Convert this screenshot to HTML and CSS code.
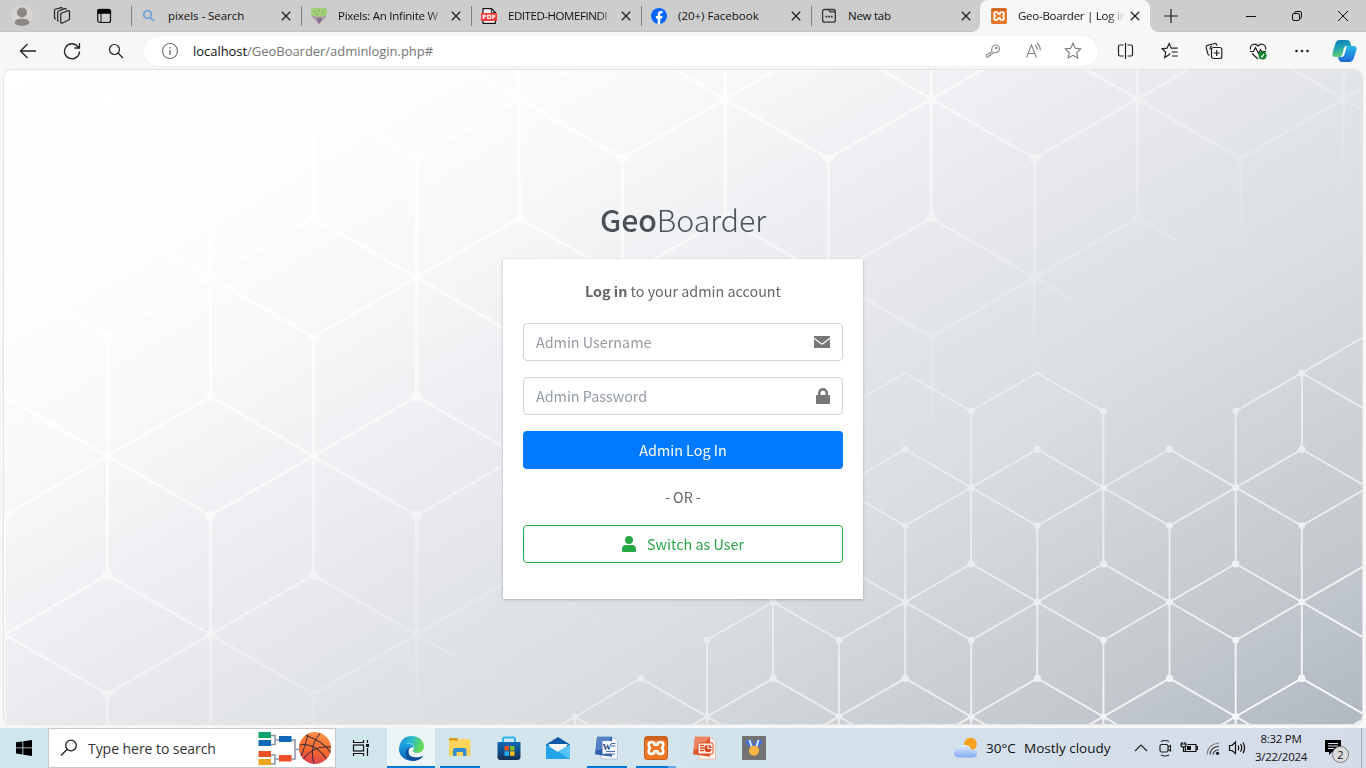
FILE: index.html
```html
<!DOCTYPE html>
<html lang="en">
<head>
<meta charset="utf-8">
<title>Geo-Boarder | Log in</title>
<link rel="stylesheet" href="styles.css">
</head>
<body>
<svg class="defs" width="0" height="0" aria-hidden="true">
  <symbol id="x" viewBox="0 0 10 10"><path d="M.8.8l8.4 8.4M9.2.8L.8 9.2" fill="none" stroke="#222" stroke-width="1.3"/></symbol>
  <symbol id="xampp" viewBox="0 0 24 24">
    <rect x=".5" y=".5" width="23" height="23" rx="2.5" fill="#ef7622" stroke="#c2601f"/>
    <path d="M1 3q0-2 2-2h18q2 0 2 2v1H1z" fill="#b9541d" opacity=".6"/>
    <path d="M7.500 6C5.600 6 4.700 7 4.700 8.800c0 1.600.5 2.500 1.500 3.200-1 .7-1.500 1.600-1.500 3.200C4.700 17 5.600 18 7.500 18s3-1 3-2.700h3c0 1.700 1.100 2.700 3 2.700s2.800-1 2.800-2.800c0-1.600-.5-2.500-1.500-3.200 1-.7 1.500-1.600 1.500-3.200C19.300 7 18.400 6 16.500 6s-3 1-3 2.700h-3C10.500 7 9.400 6 7.500 6z" fill="none" stroke="#fff" stroke-width="2.600" stroke-linejoin="round"/>
  </symbol>
</svg>

<header class="tabs">
  <div class="tab-tools">
    <svg class="avatar" width="22" height="22" viewBox="0 0 22 22"><circle cx="11" cy="11" r="10.500" fill="#d8d5d1"/><circle cx="11" cy="7.500" r="5" fill="#8b8783"/><path d="M3.500 18.300c0-3.300 2.500-4.600 7.500-4.600s7.500 1.300 7.500 4.600c-4 3.600-11 3.600-15 0z" fill="#8b8783"/></svg>
    <svg class="spaces" width="18" height="18" viewBox="0 0 18 18" fill="none" stroke="#222" stroke-width="1.200"><path d="M8 6.300l7-2.500q1.500-.4 1.500 1v7.700l-7 3.500q-1.800.6-1.800-1V7.500z"/><path d="M5.500 14.500l-.8-.6V5.300q0-1 1-1.300l6-2.300q1.500-.3 1.500 1"/><path d="M2.700 12.300l-1.200-1V3.500q0-1 1-1.300L8 .6q1-.2 1.500.8"/></svg>
    <svg class="panes" width="16" height="16" viewBox="0 0 16 16"><rect x="1.700" y="2" width="12.800" height="12.500" rx="2" fill="none" stroke="#111" stroke-width="1.200"/><path d="M1.500 2.500Q1.500 1.300 3 1.300h10q1.700 0 1.700 1.500v2.500H1.500zM5 5v9" fill="#000" stroke="#111"/></svg>
  </div>
  <div class="tab">
    <svg class="fav" viewBox="0 0 16 16" fill="none" stroke="#6ea5d8" stroke-width="1.800"><circle cx="6.500" cy="6.500" r="3.800"/><path d="M9.300 9.300l4 4"/></svg>
    <span class="tab-name wide">pixels - Search</span><svg class="close"><use href="#x"/></svg>
  </div>
  <div class="tab">
    <svg class="fav" viewBox="0 0 16 16"><path d="M1 7h14v2h-1v2h-2v2h-2v2H9v1H7v-1H6v-2H4v-2H2V9H1z" fill="#ad9aaa"/><path d="M6 10h5v2h-1v2H9v1H7v-2H6z" fill="#85718d"/><path d="M1 0h14l1 1v6h-2v1h-2v1h-2V8H8v1H5V8H2V7H0V1z" fill="#a5ce79"/><path d="M3 3h2v1H3zM7 2h2v1H7zM11 4h2v1h-2zM5 6h2v1H5zM13 1h1v1h-1zM10 6h1v1h-1z" fill="#6fa850"/></svg>
    <span class="tab-name fade">Pixels: An Infinite W</span><svg class="close"><use href="#x"/></svg>
  </div>
  <div class="tab">
    <svg class="fav" viewBox="0 0 16 16"><path d="M2 .7h8.500l3.800 3.800v10.800H2z" fill="#fff" stroke="#111" stroke-width="1.200"/><path d="M10.300.8v4h4" fill="none" stroke="#111"/><rect x="0" y="5" width="16" height="8" fill="#f23b3b"/><text x="8" y="11.300" class="pdf">PDF</text></svg>
    <span class="tab-name fade tight">EDITED-HOMEFINDI</span><svg class="close"><use href="#x"/></svg>
  </div>
  <div class="tab">
    <svg class="fav" viewBox="0 0 16 16"><circle cx="8" cy="8" r="8" fill="#0866ff"/><path d="M6.700 16v-5.500H4.900V8h1.800V6.700c0-2.600 1.200-3.700 3.700-3.700l1.100.1v2.200h-.8c-1.200 0-1.500.5-1.500 1.500V8h2.200l-.4 2.500H9.200V16z" fill="#fff"/></svg>
    <span class="tab-name facebook">(20+) Facebook</span><svg class="close"><use href="#x"/></svg>
  </div>
  <div class="tab">
    <svg class="fav" viewBox="0 0 16 16" fill="none" stroke="#333" stroke-width="1.300"><path d="M3.500 1.500h4l1.500 2.300h5.300v8.400q0 2-2 2H3.600q-2 0-2-2V3.500q0-2 2-2zM8 1.500h4.300q2 0 2 2v1"/><path d="M4.500 8.600h1.800M7.200 8.600H9M9.900 8.600h1.800" stroke-width="1.800"/></svg>
    <span class="tab-name">New tab</span><svg class="close"><use href="#x"/></svg>
  </div>
  <div class="tab active">
    <svg class="fav"><use href="#xampp"/></svg>
    <span class="tab-name fade">Geo-Boarder | Log in</span><svg class="close"><use href="#x"/></svg>
  </div>
  <svg class="plus" width="14" height="14" viewBox="0 0 14 14"><path d="M7 0v14M0 7h14" stroke="#222" stroke-width="1.200"/></svg>
  <div class="window-buttons">
    <svg width="12" height="12" viewBox="0 0 12 12"><path d="M1 6.500h10" stroke="#111"/></svg>
    <svg width="12" height="12" viewBox="0 0 12 12" fill="none" stroke="#111"><rect x="1.500" y="3.500" width="7" height="7" rx="1.500"/><path d="M3.500 3.300V3q0-1.500 1.500-1.500h4q1.500 0 1.500 1.500v4q0 1.500-1.500 1.500h-.4"/></svg>
    <svg width="12" height="12" viewBox="0 0 12 12"><path d="M1 1l10 10M11 1L1 11" stroke="#111"/></svg>
  </div>
</header>

<nav class="toolbar">
  <span class="tool"><svg width="18" height="16" viewBox="0 0 18 16"><path d="M8.500 1L1.500 8l7 7M1.500 8H17" fill="none" stroke="#222" stroke-width="1.300"/></svg></span>
  <span class="tool"><svg width="18" height="18" viewBox="0 0 18 18" fill="none" stroke="#222" stroke-width="1.300"><path d="M16.500 9.500A7.500 7.500 0 1 1 14.800 4.500L16.300 6M16.500 1v5h-5"/></svg></span>
  <span class="tool"><svg width="16" height="16" viewBox="0 0 16 16" fill="none" stroke="#222" stroke-width="1.200"><circle cx="6.500" cy="6.500" r="5"/><path d="M10 10l5 5"/></svg></span>
  <div class="address">
    <svg class="info" width="18" height="18" viewBox="0 0 18 18"><circle cx="9" cy="9" r="7.500" fill="none" stroke="#777" stroke-width="1.200"/><path d="M9 8v5M9 5v1.600" stroke="#777" stroke-width="1.500"/></svg>
    <span class="url"><b>localhost</b>/GeoBoarder/adminlogin.php#</span>
    <span class="pill-tool"><svg width="16" height="16" viewBox="0 0 16 16" fill="none" stroke="#8a8a8a" stroke-width="1.100"><path d="M7 8.500C6 4.500 8 2 10.500 2S14.500 4 14.500 5.900 12.500 10.500 8.500 9.500L7 11H5.500v1.500H4V14H1.500v-2.300z"/><circle cx="11.200" cy="5" r=".8"/></svg></span>
    <span class="pill-tool"><svg width="18" height="18" viewBox="0 0 18 18" fill="none" stroke="#808080" stroke-width="1.100"><path d="M2.500 15.500L7.500 3l5 12.500M4.200 11.500h6.600M11 3q2.200 1.500 2.200 4.500M13 1.200q3.500 2.800 3.200 7.100"/></svg></span>
    <span class="pill-tool"><svg width="18" height="18" viewBox="0 0 18 18"><path d="M9 1.300l2.300 5 5.400.6-4 3.700 1.100 5.400L9 13.300 4.200 16l1.100-5.400-4-3.700 5.400-.6z" fill="none" stroke="#777" stroke-width="1.100"/></svg></span>
  </div>
  <span class="tool"><svg width="18" height="18" viewBox="0 0 18 18" fill="none" stroke="#222" stroke-width="1.200"><path d="M6.500 3H3q-1.500 0-1.500 1.500v8Q1.500 14 3 14h3.500M10.500 3H14q1.500 0 1.500 1.500v8q0 1.500-1.500 1.500h-3.500M8.500 1v16"/></svg></span>
  <span class="tool"><svg width="18" height="18" viewBox="0 0 18 18" fill="none" stroke="#222" stroke-width="1.200"><path d="M9 11.500L8 12.700 3.700 15.500l1-5.200-3.500-3.500 4.800-.6L8.200 1.500l2 4.700h6.500M10.500 10h6.300M11 14h5.800"/></svg></span>
  <span class="tool"><svg width="18" height="18" viewBox="0 0 18 18" fill="none" stroke="#222" stroke-width="1.200"><rect x="6.500" y="5.500" width="10.300" height="11" rx="2"/><path d="M11.700 8v6M8.700 11h6M4.500 13.500q-1.500-.5-1.800-2L1.200 5.500Q1 3.800 2.500 3.300l7-1.800q1.700-.3 2.300 1.300l.3.900M5 7.500q0-3 2-3.500"/></svg></span>
  <span class="tool"><svg width="18" height="18" viewBox="0 0 18 18" fill="none" stroke="#222" stroke-width="1.200"><path d="M1.500 7.500C.5 2.500 6 .5 9 4c3-3.500 8.500-1.500 7.500 3.500M1 9.500h3.500l2-4 3 6 2-4 1 2H17M3 11.500L9 17"/><circle cx="13.500" cy="13.500" r="4" fill="#12852b" stroke="none"/><path d="M12 14l1 1 2-3" stroke="#fff"/></svg></span>
  <span class="tool"><svg width="16" height="4" viewBox="0 0 16 4" fill="#222"><circle cx="2.500" cy="2" r="1.300"/><circle cx="8" cy="2" r="1.300"/><circle cx="13.500" cy="2" r="1.300"/></svg></span>
  <span class="copilot"><svg width="25" height="24" viewBox="0 0 25 24">
    <defs><linearGradient id="cp1" x2=".3" y2="1"><stop stop-color="#0a70b8"/><stop offset=".5" stop-color="#20a4b4"/><stop offset="1" stop-color="#65d26c"/></linearGradient><linearGradient id="cp2" x2="0" y2="1"><stop stop-color="#29b6e8"/><stop offset="1" stop-color="#1c68d4"/></linearGradient></defs>
    <path d="M7 1h8q2.500 0 3.500 3l.8 3H15q-2.500 0-3.300 3l-1.200 5q-1 3-3.500 3H3q-3 0-2.500-3.500Q2 8 3.600 4 4.700 1 7 1z" fill="url(#cp1)"/>
    <path d="M18 23h-8q-2.500 0-3.500-3l-.5-2q3.500 0 4.500-3l1.500-5q.8-3 3.500-3H22q3 0 2.500 3.500Q23 16 21.400 20q-1 3-3.400 3z" fill="url(#cp2)"/><path d="M12 9q.8-2 3-2l-2.200 7.500Q12 18 9.500 18H7q2.500 0 3.500-3z" fill="#eefafa"/></svg></span>
</nav>

<main class="stage">
  <svg class="lattice" width="1358" height="654" viewBox="4 70 1358 654" aria-hidden="true">
    <defs>
      <linearGradient id="fadeBig" gradientUnits="userSpaceOnUse" x1="4" y1="70" x2="629" y2="1149"><stop stop-color="#fff" stop-opacity=".9"/><stop offset=".3" stop-color="#fff" stop-opacity=".75"/><stop offset=".43" stop-color="#fff" stop-opacity=".52"/><stop offset=".55" stop-color="#fff" stop-opacity=".2"/><stop offset=".65" stop-color="#fff" stop-opacity="0"/></linearGradient>
      <linearGradient id="fadeSmall" gradientUnits="userSpaceOnUse" x1="4" y1="70" x2="629" y2="1149"><stop offset=".55" stop-color="#fff" stop-opacity=".3"/><stop offset=".7" stop-color="#fff" stop-opacity=".5"/><stop offset=".85" stop-color="#fff" stop-opacity=".72"/><stop offset="1" stop-color="#fff" stop-opacity=".98"/></linearGradient>
      <mask id="maskBig" maskUnits="userSpaceOnUse" x="4" y="70" width="1358" height="654"><rect x="4" y="70" width="1358" height="654" fill="url(#fadeBig)"/></mask>
      <mask id="maskSmall" maskUnits="userSpaceOnUse" x="4" y="70" width="1358" height="654"><rect x="4" y="70" width="1358" height="654" fill="url(#fadeSmall)"/></mask>
      <g id="big"><path d="M0-119V119M-103-59.500L103 59.500M-103 59.500L103-59.500" stroke="#fff" stroke-width="3"/><g fill="#fff"><circle r="5"/><circle cy="-119" r="5"/><circle cy="119" r="5"/></g></g>
      <g id="bigRow"><use href="#big" x="-206"/><use href="#big"/><use href="#big" x="206"/><use href="#big" x="412"/><use href="#big" x="618"/><use href="#big" x="824"/><use href="#big" x="1030"/><use href="#big" x="1236"/></g>
      <g id="small"><path d="M0-76.400V76.400M-66.100-38.200L66.100 38.200M-66.100 38.200L66.100-38.200" stroke="#fff" stroke-width="1.900"/><g fill="#fff"><circle r="3.400"/><circle cy="-76.400" r="3.400"/><circle cy="76.400" r="3.400"/><circle cx="-66.100" cy="-38.200" r="3.400"/><circle cx="66.100" cy="-38.200" r="3.400"/></g></g>
    </defs>
    <g mask="url(#maskBig)"><use href="#bigRow" x="107.400" y="99"/><use href="#bigRow" x="210.400" y="277.500"/><use href="#bigRow" x="107.400" y="456"/><use href="#bigRow" x="210.400" y="634.500"/><use href="#bigRow" x="107.400" y="813"/></g>
    <g mask="url(#maskSmall)">
      <use href="#small" x="839" y="487.500"/><use href="#small" x="971.200" y="487.500"/><use href="#small" x="1103.400" y="487.500"/><use href="#small" x="1235.700" y="487.500"/><use href="#small" x="1367.900" y="487.500"/>
      <use href="#small" x="905.200" y="602"/><use href="#small" x="1037.300" y="602"/><use href="#small" x="1169.500" y="602"/><use href="#small" x="1301.800" y="602"/>
      <use href="#small" x="839" y="716.600"/><use href="#small" x="971.200" y="716.600"/><use href="#small" x="1103.400" y="716.600"/><use href="#small" x="1235.700" y="716.600"/><use href="#small" x="1367.900" y="716.600"/><use href="#small" x="707" y="716.600"/>
      <path d="M839 411l66-38 66 38 66-38 66 38M1236 411l132-76.500M1302 373l66 38M1302 373v77M707 640l66-38 66 38M773 602v76M641 678l-82 48M575 717v8M575 717l16 9" fill="none" stroke="#fff" stroke-width="1.900"/>
      <g fill="#fff"><circle cx="1301.800" cy="373" r="3.400"/><circle cx="773" cy="602" r="3.400"/><circle cx="575" cy="716.600" r="3.400"/></g>
    </g>
  </svg>
  <div class="login">
    <h1 class="logo"><b>Geo</b>Boarder</h1>
    <section class="card">
      <p class="message"><b>Log in</b> to your admin account</p>
      <div class="field"><span>Admin Username</span><svg width="16" height="16" viewBox="0 0 16 16"><path d="M0 2h16v1.500L8.800 9q-.8.600-1.600 0L0 3.500zM0 5l6.500 4.900q1.500 1 3 0L16 5v9H0z" fill="#777"/></svg></div>
      <div class="field"><span>Admin Password</span><svg width="14" height="16" viewBox="0 0 14 16"><path d="M2 7V5a5 5 0 0 1 10 0v2h1q1 0 1 1v7q0 1-1 1H1q-1 0-1-1V8q0-1 1-1zm2.500 0h5V5a2.500 2.500 0 0 0-5 0z" fill="#777" fill-rule="evenodd"/></svg></div>
      <div class="button primary"><span>Admin Log In</span></div>
      <p class="or">- OR -</p>
      <div class="button outline"><svg width="14" height="16" viewBox="0 0 14 16" fill="#28a745"><circle cx="7" cy="4" r="4"/><path d="M4 9h6q4 0 4 4v1.500q0 1.500-1.500 1.500h-11Q0 16 0 14.500V13q0-4 4-4z"/></svg><span>Switch as User</span></div>
    </section>
  </div>
</main>

<footer class="taskbar">
  <div class="start"><svg width="16" height="16" viewBox="0 0 16 16"><path d="M0 2.300l6.500-.9v6.100H0zM7.300 1.300L16 0v7.500H7.300zM0 8.300h6.500v6.200L0 13.600zM7.300 8.300H16V16l-8.700-1.300z"/></svg></div>
  <div class="search">
    <svg width="18" height="18" viewBox="0 0 18 18" fill="none" stroke="#222" stroke-width="1.300"><circle cx="11" cy="6.500" r="5.300"/><path d="M7.200 10.300L1 16.500"/></svg>
    <span>Type here to search</span>
    <svg class="doodle" width="75" height="38" viewBox="0 0 75 38"><g fill="none" stroke="#8d93a3" stroke-width="1.500"><path d="M13 6.500h4v9h-4M17 11h5M13 26h4v9h-4M17 30h5M33 11h4v19h-4M37 20.500h5"/></g><path d="M.5 3H13v6H.5z" fill="#10a56c"/><path d="M.5 11H13v6H.5zM21 7h12.500v6H21z" fill="#1068b8"/><path d="M.5 22H13v6H.5zM21 26h12.500v6.500H21z" fill="#ef4e26"/><path d="M.5 30H13v6H.5z" fill="#eda61c"/>
      <defs><linearGradient id="ball" x1=".6" y1="0" x2=".4" y2="1"><stop stop-color="#ff9147"/><stop offset=".6" stop-color="#f4662f"/><stop offset="1" stop-color="#dc3f56"/></linearGradient></defs><circle cx="57" cy="19" r="16" fill="url(#ball)"/><path d="M41.500 16q15-3 27 14M48 6.500q18 6 24.500 17M62 4.500q-11 12-6 30M73 18q-17-2-28 12M50 5q-3 13-7 22" fill="none" stroke="#463036" stroke-width="1.100"/></svg>
  </div>
  <div class="taskview"><svg width="18" height="18" viewBox="0 0 18 18" fill="none" stroke="#111" stroke-width="1.200"><path d="M1.500 1v2.500h10V1M1.500 17v-2.500h10V17M15.500 1v3M15.500 9v8"/><rect x="1.500" y="6" width="10" height="6"/><path d="M14 5h3v3h-3z" fill="#111" stroke="none"/></svg></div>
  <div class="apps">
    <div class="app current"><svg width="25" height="25" viewBox="0 0 24 24"><defs><linearGradient id="e1" x2="1" y2=".3"><stop stop-color="#1684d3"/><stop offset=".5" stop-color="#2cbbd0"/><stop offset="1" stop-color="#66db55"/></linearGradient><linearGradient id="e2" x2="0" y2="1"><stop stop-color="#1ba5e4"/><stop offset="1" stop-color="#0961ae"/></linearGradient></defs><path d="M0 12C1 3.500 6 0 12 0c7.500 0 12 5 12 9.800 0 4-2.800 6.400-6.500 6.400-2.900 0-4.600-1.200-4.400-2 .2-.7 1.200-1.200 1.200-3C14.300 8.500 11.500 7 8.500 7 4 7 1 9.500 0 12z" fill="url(#e1)"/><path d="M0 13C0 8.500 4.500 6.500 8.500 7c3 .3 5.500 2 5.800 4-3-1.500-5.300.7-5.300 4 0 4.500 3.500 8 7.500 8C8 26 0 20 0 13z" fill="url(#e2)"/><path d="M9 15c0 3.500 3.500 5.500 7.500 5.500 2.500 0 4.500-.8 5.700-1.400.6-.2.800.2.500.7C20.500 22.700 16.500 24 13.500 24 8 23 5 18 7 14c1.500-3 4.500-4.300 6.500-3.500C10.500 10.500 9 12.500 9 15z" fill="#0f4e9c"/></svg></div>
    <div class="app open"><svg width="22" height="20" viewBox="0 0 22 20"><path d="M0 1q0-1 1-1h7l2 3H0z" fill="#d99b13"/><path d="M0 2.500h9l1.500-1.500H20q1.500 0 1.500 1.500V18H0z" fill="#ffd35e"/><path d="M4 18v-6q0-2 2-2h9.500q2 0 2 2v6h-3.500v-4h-6.500v4z" fill="#348fcf"/></svg></div>
    <div class="app"><svg width="24" height="24" viewBox="0 0 24 24"><defs><linearGradient id="st" x2="0" y2="1"><stop stop-color="#0f69bb"/><stop offset="1" stop-color="#173052"/></linearGradient></defs><path d="M6 8V3q0-1.500 1.500-1.500h9Q18 1.500 18 3v5" fill="none" stroke="#2eb4ed" stroke-width="2"/><path d="M.5 6h23v15q0 3-3 3h-17q-3 0-3-3z" fill="url(#st)"/><path d="M7.500 10H12v4.500H7.500z" fill="#ef5425"/><path d="M13 10h4.500v4.500H13z" fill="#7fba2c"/><path d="M7.500 15.300H12v4.500H7.500z" fill="#1fb0ef"/><path d="M13 15.300h4.500v4.500H13z" fill="#fdba12"/></svg></div>
    <div class="app"><svg width="24" height="24" viewBox="0 0 24 24"><path d="M0 8.500L12 1l12 7.500V10H0z" fill="#0f5ba7"/><path d="M2 8h20l-8 9h-4z" fill="#f4f7fa"/><path d="M0 8.500L12 16 24 8.500V23H0z" fill="#25a3ea"/><path d="M24 8.500V23L12 15.500z" fill="#54c3f5"/></svg></div>
    <div class="app open"><svg width="23" height="24" viewBox="0 0 23 24"><path d="M6 2h13l3.500 3v18H6z" fill="#f6f8fd" stroke="#aab9d6" stroke-width=".8"/><path d="M2 .8h15v20L0 18.300z" fill="#315fae"/><path d="M2 .8h15L9 12 1 15z" fill="#7096d2" opacity=".6"/><rect x="7.500" y="5" width="12" height="13" fill="#f9fbff"/><path d="M16 7.500h4.500M16 10h4.500M11 15.500h9M10 18h10" stroke="#4a6fae"/><text x="7.500" y="13.500" class="wd">W</text></svg></div>
    <div class="app open more"><svg width="24" height="24"><use href="#xampp"/></svg></div>
    <div class="app"><svg width="23" height="24" viewBox="0 0 23 24"><path d="M6 2h13l3.500 3v18H6z" fill="#fff4ec" stroke="#e0b9a6" stroke-width=".8"/><path d="M2 .8h15v20L0 18.300z" fill="#e0562c"/><path d="M2 .8h15L9 10 1 14z" fill="#f2a27f" opacity=".65"/><rect x="5" y="7" width="15" height="11" rx="1" fill="#fff5ef" stroke="#d84c23"/><path d="M7 9.500h4M7 12h4M7 14.500h4" stroke="#d84c23" stroke-width="1.500"/><circle cx="15" cy="12.500" r="3.700" fill="#d84c23"/><path d="M15 12.500V9M15 12.500h4" stroke="#fff"/></svg></div>
    <div class="app"><svg width="24" height="24" viewBox="0 0 24 24"><rect width="24" height="24" fill="#737373"/><path d="M4 4h6l2 7h-2q-6-1-6-7zM14 4h6q0 6-6 7h-2z" fill="#3f70ea"/><path d="M7.500 4l2 6.500M16.500 4l-2 6.500" fill="none" stroke="#d6ebff" stroke-width="2"/><circle cx="12" cy="14.800" r="5" fill="#ffb545"/></svg></div>
  </div>
  <div class="tray">
    <svg class="weather" width="26" height="22" viewBox="0 0 26 22"><defs><linearGradient id="cl" x2="0" y2="1"><stop stop-color="#e6f0ff"/><stop offset="1" stop-color="#7fa9ee"/></linearGradient></defs><circle cx="17.500" cy="7" r="6.300" fill="#f9a01d"/><path d="M6 20.500Q1 20.500 1 16t5-4.500Q8 8 12 8q5 0 6.500 4.500 5.500-.5 5.500 4t-4.500 4z" fill="url(#cl)"/></svg>
    <span class="temp">30°C</span><span class="sky">Mostly cloudy</span>
    <svg class="ticon" viewBox="0 0 18 18" fill="none" stroke="#222" stroke-width="1.200"><path d="M3 12l6-6 6 6"/></svg>
    <svg class="ticon" viewBox="0 0 18 18" fill="none" stroke="#222" stroke-width="1.200"><rect x="4" y="5.500" width="8" height="7.500" rx="1.500"/><path d="M12 8l2.500-1.500v5.500L12 10.500M5 2.500q4-2 8 0M5 16q4 2 8 0"/></svg>
    <svg class="ticon" viewBox="0 0 18 18" fill="none" stroke="#111" stroke-width="1.200"><path d="M7.500 5.500H16v7H5.500v-4M16 7.500h1.500v3H16M2 3v2M5 3v2M1 5h5v1q0 2-2.500 2T1 6zM3.500 8v4.500h2"/><path d="M7 7h4v4H7z" fill="#111" stroke="none"/></svg>
    <svg class="ticon" viewBox="0 0 18 18" fill="none" stroke="#333" stroke-width="1.100"><path d="M3 15.500Q4 5 15 4" stroke="#777"/><path d="M6 15.500Q6.500 8 15 7.300M9 15.500q.5-4.500 6-4.800"/><circle cx="13.500" cy="14.300" r="1.600" fill="#111" stroke="none"/></svg>
    <svg class="ticon vol" viewBox="0 0 18 18" fill="none" stroke="#111" stroke-width="1.200"><path d="M1.500 6.500H4l3.500-3.500v11.500L4 11.500H1.500zM10 6.500q1.500 2.300 0 4.600M12.500 5q2.500 3.800 0 7.600M15 3.500q3.200 5.300 0 10.600"/></svg>
    <div class="clock"><span>8:32 PM</span><span>3/22/2024</span></div>
    <div class="notify"><svg width="16" height="16" viewBox="0 0 16 16"><path d="M0 0h16v12h-9l-3 3v-3H0z"/><path d="M3 3.500h10M3 6h10M3 8.500h6" stroke="#dce3ec" stroke-width="1.100"/></svg><span class="badge">2</span></div>
    <span class="edge"></span>
  </div>
</footer>
</body>
</html>
```
FILE: styles.css
```css
* { box-sizing: border-box; }
body {
  margin: 0;
  width: 1366px;
  height: 768px;
  overflow: hidden;
  display: flex;
  flex-direction: column;
  background: #f7f7f7;
  font-family: "Open Sans", "Noto Sans", sans-serif;
  color: #111;
}
svg { display: block; flex: none; }
.defs { position: absolute; }

/* tab strip */
.tabs { height: 32px; flex: none; display: flex; background: #cdcdcd; border-bottom: 1px solid #c5c5c5; }
.tab-tools { width: 131px; flex: none; display: flex; align-items: center; padding-left: 11px; }
.spaces { margin-left: 20px; }
.panes { margin-left: 25px; }
.tab { width: 170px; flex: none; display: flex; align-items: center; padding: 0 10px; position: relative; }
.tab::before { content: ""; position: absolute; left: 0; top: 6px; width: 1px; height: 20px; background: #808080; }
.fav { width: 16px; height: 16px; }
.tab-name { width: 108px; margin-left: 11px; flex: none; white-space: nowrap; font-size: 11.500px; letter-spacing: -.25px; line-height: 16px; }
.wide { letter-spacing: -.05px; }
.tight { letter-spacing: -.45px; }
.facebook { letter-spacing: 0; }
.fade { -webkit-mask-image: linear-gradient(90deg, #000 84%, transparent 99%); mask-image: linear-gradient(90deg, #000 84%, transparent 99%); }
.close { width: 10px; height: 10px; margin-left: 5px; }
.active { background: #f7f7f7; border-radius: 8px 8px 0 0; height: 32px; margin-left: -1px; padding-left: 11px; }
.active .close { margin-left: 4px; }
.active::before, .active::after { content: ""; position: absolute; top: auto; bottom: 0; width: 8px; height: 8px; }
.active::before { left: -8px; background: radial-gradient(circle at 0 0, transparent 7.500px, #f7f7f7 8px); }
.active::after { right: -8px; background: radial-gradient(circle at 100% 0, transparent 7.500px, #f7f7f7 8px); }
.pdf { font: bold 6px "DejaVu Sans", sans-serif; fill: #fff; text-anchor: middle; }
.plus { margin: 9px 0 0 14px; }
.window-buttons { margin-left: auto; display: flex; gap: 34px; padding: 10px 17px 0 0; }

/* address row */
.toolbar { height: 38px; flex: none; display: flex; align-items: center; padding-left: 6px; background: #f7f7f7; }
.tool { width: 44px; display: flex; justify-content: center; }
.address { width: 954px; height: 30px; margin: 0 6px; padding: 0 5px 0 17px; display: flex; align-items: center; border-radius: 15px; background: #fff; box-shadow: 0 0 2px #e6e6e6; }
.url { flex: 1; margin-left: 14px; font-size: 13px; letter-spacing: -.04px; color: #767676; }
.url b { font-weight: 400; color: #111; }
.pill-tool { width: 40px; display: flex; justify-content: center; }
.copilot { width: 40px; display: flex; justify-content: center; }

/* page */
.stage {
  position: relative;
  height: 654px;
  flex: none;
  margin: 0 4px 4px;
  border-radius: 8px;
  overflow: hidden;
  box-shadow: 0 0 2px rgba(0, 0, 0, .28);
  background: linear-gradient(150deg, #fff 0%, #fdfdfd 18%, #f7f8f9 30%, #edeef1 42%, #e4e6e9 52%, #dbdfe2 65%, #cfd4d8 76%, #c4c9cd 87%, #bec4cc 91%, #b0b8c1 100%);
  font-family: "Noto Sans CJK SC", "Noto Sans CJK JP", sans-serif;
}
.lattice { position: absolute; inset: 0; }
.login { position: relative; width: 360px; margin: 0 auto; padding-top: 124px; }
.logo { margin: 0 0 15px; height: 50px; line-height: 50px; text-align: center; font-size: 30.300px; letter-spacing: -.05px; font-weight: 300; color: #495057; }
.logo b { font-weight: 500; }
.card { height: 340px; padding: 20px; background: #fff; box-shadow: 0 0 1px rgba(0, 0, 0, .125), 0 1px 3px rgba(0, 0, 0, .2); color: #666; font-size: 14.350px; }
.message, .or { margin: 0; line-height: 24px; text-align: center; }
.message { padding-bottom: 20px; }
.field { height: 38px; margin-bottom: 16px; padding: 0 12px; display: flex; align-items: center; justify-content: space-between; border: 1px solid #ced4da; border-radius: 4px; color: #939ba2; }
.field span, .button span { padding-bottom: 2px; }
.button { height: 38px; display: flex; align-items: center; justify-content: center; border-radius: 4px; }
.primary { background: #007bff; color: #fff; }
.or { padding: 16px 0; }
.outline { gap: 11px; border: 1px solid #28a745; color: #28a745; }

/* taskbar */
.taskbar { height: 40px; flex: none; display: flex; background: linear-gradient(90deg, #d0e7ee, #d3e4ec 50%, #d5dce9); }
.start { width: 48px; display: flex; align-items: center; justify-content: center; }
.search { width: 288px; height: 40px; padding-left: 11px; display: flex; align-items: center; background: #fff; border: 1px solid #c6c9cb; }
.search span { width: 170px; margin-left: 10px; font-size: 14px; letter-spacing: -.05px; color: #333; white-space: nowrap; }
.taskview { width: 51px; padding-right: 2px; display: flex; align-items: center; justify-content: center; }
.apps { display: flex; }
.app { width: 49px; height: 40px; display: flex; align-items: center; justify-content: center; position: relative; }
.current { width: 48px; background: #ebf5f8; border-bottom: 2px solid #0078d7; padding-top: 2px; }
.open::after { content: ""; position: absolute; left: 5px; bottom: 0; width: 40px; height: 2px; background: #0078d7; }
.more::after { background: linear-gradient(90deg, #0078d7 80%, #64ade7 80%); }
.wd { font: bold 9px "Liberation Serif", serif; fill: #254c97; }
.tray { margin-left: auto; display: flex; align-items: center; height: 40px; }
.temp, .sky { font-size: 13.500px; white-space: nowrap; }
.temp { width: 31px; margin-left: 7px; }
.sky { width: 88px; margin: 0 20px 0 7px; letter-spacing: 0; }
.ticon { width: 18px; height: 18px; margin-right: 6px; }
.vol { margin-right: 0; }
.clock { width: 70px; display: flex; flex-direction: column; text-align: center; font-size: 11.500px; letter-spacing: -.25px; line-height: 18px; }
.notify { width: 45px; padding-left: 9px; position: relative; }
.badge { position: absolute; left: 16px; top: 6px; width: 17px; height: 17px; border: 1px solid #777; border-radius: 50%; background: #dcdcdc; font-size: 11px; line-height: 15px; text-align: center; }
.edge { width: 5px; height: 40px; border-left: 1px solid #a4acb8; }
```
